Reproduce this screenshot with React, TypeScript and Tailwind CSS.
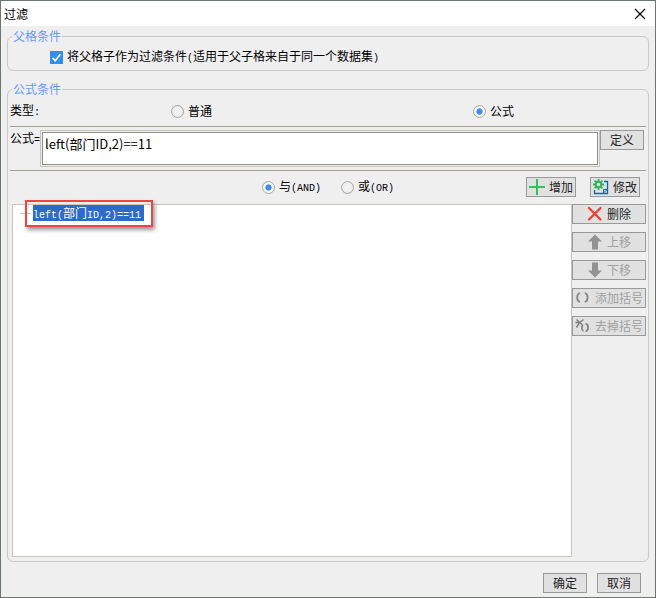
import { useState } from "react";
import type { ComponentProps, ReactNode } from "react";
import clsx from "clsx";

const FORMULA = "left(部门ID,2)==11";

/* Latin runs are set in a half-width mono next to the full-width CJK text */
function Half({ children }: { children: ReactNode }) {
  return <span className="font-['Liberation_Mono',monospace] text-[10px]">{children}</span>;
}

function Radio({ children, ...props }: ComponentProps<"input">) {
  return (
    <label className="flex items-center gap-1">
      <input
        type="radio"
        className="size-[13px] shrink-0 appearance-none rounded-full border border-[#a8a8a8] bg-radial from-[#f2f2f2] from-40% to-[#dedede] checked:from-[#3d8cf0] checked:from-35% checked:via-[#fafafa] checked:via-45% checked:to-[#efefef]"
        {...props}
      />
      <span>{children}</span>
    </label>
  );
}

function Button({ className, children, ...props }: ComponentProps<"button">) {
  return (
    <button
      type="button"
      className={clsx(
        "flex h-5 items-center justify-center gap-1 border border-[#999] bg-[#e1e1e1] leading-4 whitespace-nowrap text-[#222] disabled:text-[#a0a0a0]",
        className,
      )}
      {...props}
    >
      {children}
    </button>
  );
}

function Group({ title, className, children }: { title: string; className?: string; children: ReactNode }) {
  return (
    <fieldset className={clsx("mx-[6px] min-w-0 rounded-md border border-[#c8c8c8] px-[2px]", className)}>
      <legend className="ml-[2px] px-px leading-4 text-[#6699ff]">{title}</legend>
      {children}
    </fieldset>
  );
}

/* ── Icons ── */
function PlusIcon() {
  return (
    <svg viewBox="0 0 16 16" className="size-4" fill="none" stroke="#34c05c" strokeWidth="2">
      <path d="M8 0v16M0 8h16" />
    </svg>
  );
}

function EditIcon() {
  return (
    <svg viewBox="0 0 16 16" className="size-4" fill="none">
      <path d="M11 2.500h3.500v12H1.500V11" stroke="#1268b3" strokeWidth="1.300" />
      <path d="M10.500 14V10.500H14.500M10.500 14L14 10.500" stroke="#1268b3" />
      <circle cx="5.500" cy="5.500" r="2.800" stroke="#2fb457" strokeWidth="2" />
      <path
        d="M5.500 0v2M5.500 9v2M0 5.500h2M9 5.500h2M1.600 1.600l1.500 1.500M7.900 7.900l1.500 1.500M9.400 1.600L7.900 3.100M3.100 7.900L1.600 9.400"
        stroke="#2fb457"
        strokeWidth="1.800"
      />
    </svg>
  );
}

function DeleteIcon() {
  return (
    <svg viewBox="0 0 16 16" className="size-4" fill="none" stroke="#ea4335" strokeWidth="2.400" strokeLinecap="round">
      <path d="M2 2l11.500 11.500M13.500 2l-11.500 11.500" />
    </svg>
  );
}

function UpIcon() {
  return (
    <svg viewBox="0 0 16 16" className="size-4" fill="#929292">
      <path d="M8 0.500L15 7.500H11V15.500H5V7.500H1z" />
    </svg>
  );
}

function DownIcon() {
  return (
    <svg viewBox="0 0 16 16" className="size-4" fill="#929292">
      <path d="M8 15.500L15 8.500H11V0.500H5V8.500H1z" />
    </svg>
  );
}

function AddParenIcon() {
  return (
    <svg viewBox="0 0 16 16" className="size-4" fill="none" stroke="#868686" strokeWidth="1.800">
      <path d="M5 3C3 3.500 2.200 5 2.200 7.500S3 11.500 5 12M9.800 3c2 .5 2.800 2 2.800 4.500s-.8 4-2.800 4.500" />
    </svg>
  );
}

function RemoveParenIcon() {
  return (
    <svg viewBox="0 0 16 16" className="size-4" fill="none" stroke="#808080">
      <path d="M7.800 7c-.8.800-1 1.800-1 3s.4 2.400 1.700 3M10.500 5.500c1.800.6 2.600 2 2.600 4s-.8 3.400-2.600 4" strokeWidth="1.700" />
      <path d="M1.500 1.500L8 7.500M4.800 4.500L8.500 1.500M4.500 4.500L1.500 9.500M0.500 4.500H5" strokeWidth="1.500" />
    </svg>
  );
}

const sideActions = [
  { label: "删除", icon: <DeleteIcon />, disabled: false },
  { label: "上移", icon: <UpIcon />, disabled: true },
  { label: "下移", icon: <DownIcon />, disabled: true },
  { label: "添加括号", icon: <AddParenIcon />, disabled: true },
  { label: "去掉括号", icon: <RemoveParenIcon />, disabled: true },
];

export default function App() {
  const [formula, setFormula] = useState(FORMULA);

  return (
    <div className="flex h-screen flex-col border border-[#6b776f] bg-[#efefef] font-['Noto_Sans_CJK_SC',sans-serif] text-[12px] leading-4 text-black">
      {/* Title bar */}
      <header className="flex h-[25px] shrink-0 items-center justify-between bg-white pr-[7px] pl-[3px]">
        <h1>过滤</h1>
        <button type="button" aria-label="关闭" className="p-0.5">
          <svg viewBox="0 0 12 12" className="size-3" stroke="#000" strokeWidth="1.100">
            <path d="M1 1l10 10M11 1L1 11" />
          </svg>
        </button>
      </header>

      <main className="grid flex-1 grid-rows-[auto_1fr_auto] gap-[10px] pt-[2px]">
        {/* Parent cell condition */}
        <Group title="父格条件">
          <label className="flex h-[26px] items-center gap-1 pl-10">
            <span className="relative size-[13px] shrink-0">
              <input type="checkbox" defaultChecked className="peer block size-[13px] appearance-none border border-[#999] bg-white checked:border-[#2f8eee] checked:bg-[#2f8eee]" />
              <svg viewBox="0 0 13 13" className="pointer-events-none absolute inset-0 hidden size-[13px] peer-checked:block" fill="none" stroke="#fff" strokeWidth="1.800">
                <path d="M2.500 6.800L5.300 9.700L10.300 3.200" />
              </svg>
            </span>
            <span>
              将父格子作为过滤条件<Half>(</Half>适用于父子格来自于同一个数据集<Half>)</Half>
            </span>
          </label>
        </Group>

        {/* Formula condition */}
        <Group title="公式条件">
          <div className="flex h-full flex-col pb-1">
            <div className="grid h-[29px] shrink-0 grid-cols-[161fr_302fr_173fr] items-center pb-px">
              <span>
                类型<Half>:</Half>
              </span>
              <Radio name="type">普通</Radio>
              <Radio name="type" defaultChecked>公式</Radio>
            </div>

            <div className="flex items-start border-y border-[#a0a096] py-[3px] pr-[2px]">
              <label htmlFor="formula" className="w-[30px] shrink-0 whitespace-nowrap">
                公式<Half>=</Half>
              </label>
              <div className="h-[37px] min-w-0 flex-1 border border-[#c9c5b8] p-px">
                <textarea
                  id="formula"
                  value={formula}
                  onChange={(e) => setFormula(e.target.value)}
                  className="block size-full resize-none border border-[#8e8e8e] bg-white px-[2px] py-[3px] text-[13px] leading-4 outline-none"
                />
              </div>
              <Button className="w-11">定义</Button>
            </div>

            <div className="mb-px grid h-8 shrink-0 grid-cols-[1fr_auto_1fr] items-center">
              <div className="col-start-2 flex gap-5">
                <Radio name="logic" defaultChecked>
                  与<Half>(AND)</Half>
                </Radio>
                <Radio name="logic">
                  或<Half>(OR)</Half>
                </Radio>
              </div>
              <div className="flex justify-end gap-[14px] pr-[6px]">
                <Button className="w-[50px]"><PlusIcon />增加</Button>
                <Button className="w-[50px]"><EditIcon />修改</Button>
              </div>
            </div>

            <div className="flex flex-1 pl-[2px]">
              {/* Condition tree */}
              <ul className="relative flex-1 border border-[#c9c5b8] bg-white">
                <li className="flex items-center pl-[7px]">
                  <span className="mr-[3px] h-px w-[10px] bg-[#c9c5b8]" />
                  <span className="h-4 bg-[#2d6bc9] pr-[3px] whitespace-nowrap text-white">
                    <Half>left(</Half>部门<Half>ID,2)==11</Half>
                  </span>
                </li>
                <li aria-hidden className="pointer-events-none absolute -top-[5px] left-3 h-[27px] w-[128px] border-2 border-[#f04343] shadow-[2px_3px_4px_rgba(0,0,0,0.4)]" />
              </ul>
              <div className="flex w-[74px] flex-col gap-2">
                {sideActions.map((action) => (
                  <Button key={action.label} disabled={action.disabled}>
                    {action.icon}
                    {action.label}
                  </Button>
                ))}
              </div>
            </div>
          </div>
        </Group>

        {/* Dialog buttons */}
        <footer className="flex justify-end gap-[10px] pt-px pr-[14px] pb-1">
          <Button className="w-11">确定</Button>
          <Button className="w-11">取消</Button>
        </footer>
      </main>
    </div>
  );
}
